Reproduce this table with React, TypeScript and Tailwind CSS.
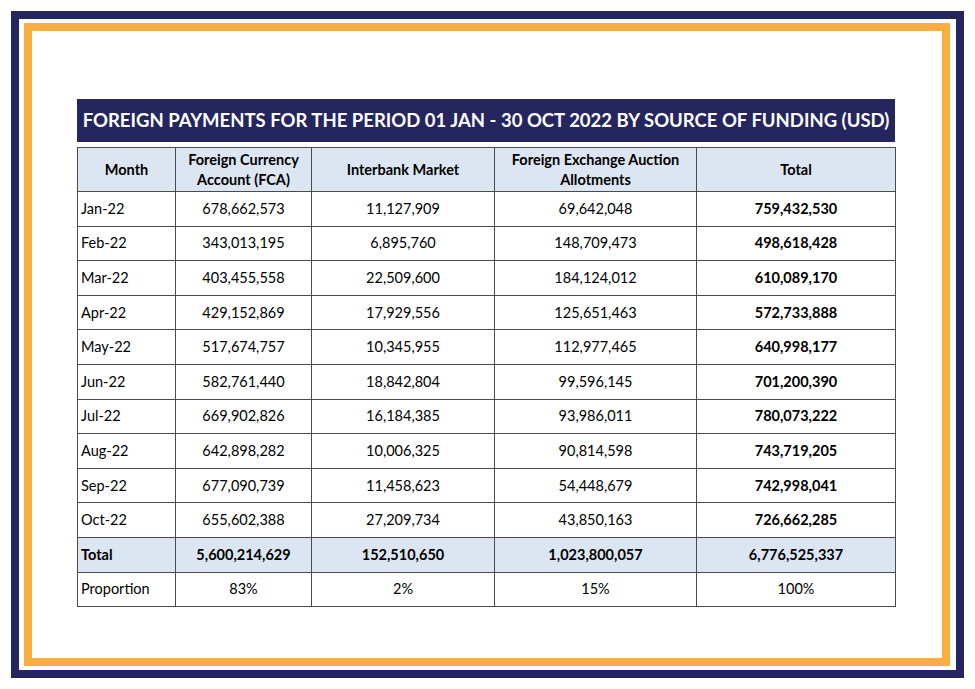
const rows: [string, string, string, string, string][] = [
  ["Jan-22", "678,662,573", "11,127,909", "69,642,048", "759,432,530"],
  ["Feb-22", "343,013,195", "6,895,760", "148,709,473", "498,618,428"],
  ["Mar-22", "403,455,558", "22,509,600", "184,124,012", "610,089,170"],
  ["Apr-22", "429,152,869", "17,929,556", "125,651,463", "572,733,888"],
  ["May-22", "517,674,757", "10,345,955", "112,977,465", "640,998,177"],
  ["Jun-22", "582,761,440", "18,842,804", "99,596,145", "701,200,390"],
  ["Jul-22", "669,902,826", "16,184,385", "93,986,011", "780,073,222"],
  ["Aug-22", "642,898,282", "10,006,325", "90,814,598", "743,719,205"],
  ["Sep-22", "677,090,739", "11,458,623", "54,448,679", "742,998,041"],
  ["Oct-22", "655,602,388", "27,209,734", "43,850,163", "726,662,285"],
];

const cell = "border border-[#4a4a4a] text-center";

export default function App() {
  return (
    <div
      className="w-[975px] h-[689px] bg-white p-[11px] text-black"
      style={{ fontFamily: "Lato, 'Open Sans', sans-serif" }}
    >
      <div className="h-full border-[8px] border-[#25255f] pt-[4px] pb-[4px] pl-[5px] pr-[6px]">
        <div className="h-full border-[8px] border-[#fbad3f] pl-[45px] pt-[68px]">
          <div className="w-[818px] h-[43px] bg-[#25255f] flex items-center justify-center whitespace-nowrap text-white font-bold text-[18.5px]">
            FOREIGN PAYMENTS FOR THE PERIOD 01 JAN - 30 OCT 2022 BY SOURCE OF FUNDING (USD)
          </div>
          <table className="mt-[5px] w-[818px] border-collapse table-fixed text-[14.5px] leading-[20px]">
            <colgroup>
              <col className="w-[98px]" />
              <col className="w-[136px]" />
              <col className="w-[183px]" />
              <col className="w-[202px]" />
              <col className="w-[199px]" />
            </colgroup>
            <thead>
              <tr className="h-[44px] bg-[#dce6f2] font-bold">
                <th className={cell}>Month</th>
                <th className={cell}>
                  Foreign Currency
                  <br />
                  Account (FCA)
                </th>
                <th className={cell}>Interbank Market</th>
                <th className={cell}>
                  Foreign Exchange Auction
                  <br />
                  Allotments
                </th>
                <th className={cell}>Total</th>
              </tr>
            </thead>
            <tbody>
              {rows.map((r) => (
                <tr key={r[0]} className="h-[34.6px]">
                  <td className="border border-[#4a4a4a] text-left pl-[3px]">{r[0]}</td>
                  <td className={cell}>{r[1]}</td>
                  <td className={cell}>{r[2]}</td>
                  <td className={cell}>{r[3]}</td>
                  <td className={`${cell} font-bold`}>{r[4]}</td>
                </tr>
              ))}
              <tr className="h-[35px] bg-[#dce6f2] font-bold">
                <td className="border border-[#4a4a4a] text-left pl-[3px]">Total</td>
                <td className={cell}>5,600,214,629</td>
                <td className={cell}>152,510,650</td>
                <td className={cell}>1,023,800,057</td>
                <td className={cell}>6,776,525,337</td>
              </tr>
              <tr className="h-[34px]">
                <td className="border border-[#4a4a4a] text-left pl-[3px]">Proportion</td>
                <td className={cell}>83%</td>
                <td className={cell}>2%</td>
                <td className={cell}>15%</td>
                <td className={cell}>100%</td>
              </tr>
            </tbody>
          </table>
        </div>
      </div>
    </div>
  );
}
